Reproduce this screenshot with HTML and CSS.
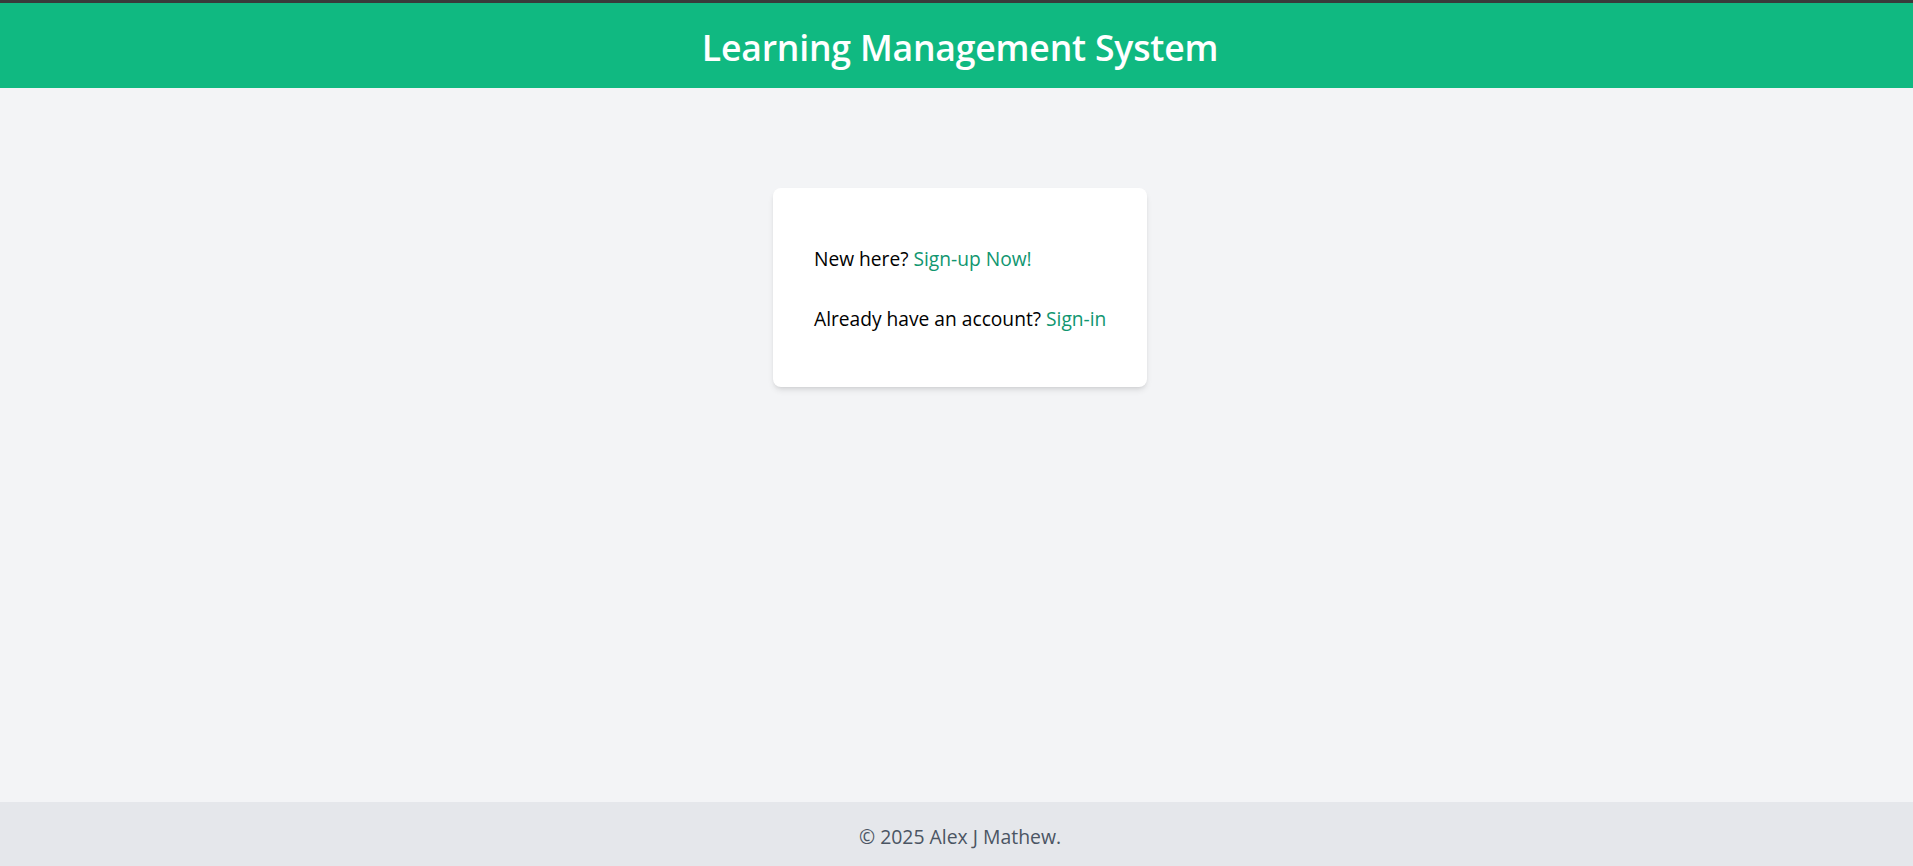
FILE: index.html
```html
<!DOCTYPE html>
<html lang="en">
<head>
<meta charset="utf-8">
<title>Learning Management System</title>
<link rel="stylesheet" href="styles.css">
</head>
<body>
<div class="page">
  <header class="topbar">
    <h1 class="title">Learning Management System</h1>
  </header>
  <main class="content">
    <div class="card">
      <p class="line">New here? <a class="link" href="#">Sign-up Now!</a></p>
      <p class="line">Already have an account? <a class="link" href="#">Sign-in</a></p>
    </div>
  </main>
  <footer class="footer">
    <p class="copy">© 2025 Alex J Mathew.</p>
  </footer>
</div>
</body>
</html>
```

FILE: styles.css
```css
* { box-sizing: border-box; }
html, body { margin: 0; padding: 0; }
body {
  font-family: "Open Sans", "Noto Sans", "Liberation Sans", sans-serif;
  background: #f3f4f6;
  color: #000;
}
.page {
  min-height: 100vh;
  display: flex;
  flex-direction: column;
}
.topbar {
  border-top: 3px solid #383b3a;
  background: #10b981;
  height: 88px;
  display: flex;
  align-items: center;
  justify-content: center;
  padding-top: 3px;
  padding-left: 7px;
}
.title {
  margin: 0;
  color: #fff;
  font-size: 35.6px;
  font-weight: 600;
  letter-spacing: -0.2px;
}
.content {
  flex: 1;
  display: flex;
  justify-content: center;
  align-items: flex-start;
  padding-top: 100px;
  padding-left: 7px;
}
.card {
  background: #fff;
  border-radius: 8px;
  box-shadow: 0 4px 6px -1px rgba(0,0,0,0.1), 0 2px 4px -2px rgba(0,0,0,0.1);
  width: 374px;
  padding: 57px 20px 54px 41px;
}
.line {
  margin: 0;
  font-size: 19.2px;
  line-height: 28px;
  white-space: nowrap;
}
.line + .line { margin-top: 32px; }
.link {
  color: #109670;
  text-decoration: none;
}
.footer {
  background: #e5e7eb;
  height: 64px;
  display: flex;
  align-items: center;
  justify-content: center;
  padding-left: 7px;
  padding-top: 5px;
}
.copy {
  margin: 0;
  color: #4b5563;
  font-size: 19.4px;
}
```
